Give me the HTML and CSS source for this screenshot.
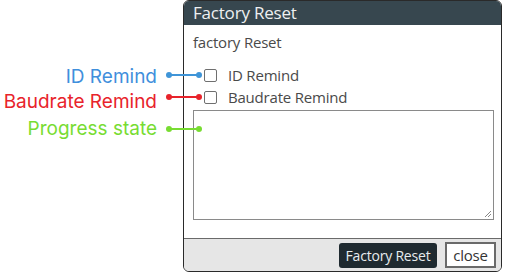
FILE: index.html
```html
<!DOCTYPE html>
<html>
<head>
<meta charset="utf-8">
<link rel="stylesheet" href="styles.css">
</head>
<body>
<div class="page">
  <div class="notes">
    <div class="note note-blue">ID Remind</div>
    <div class="note note-red">Baudrate Remind</div>
    <div class="note note-green">Progress state</div>
  </div>
  <div class="dialog">
    <div class="titlebar">Factory Reset</div>
    <div class="content">
      <div class="heading">factory Reset</div>
      <label class="check"><span class="box"></span>ID Remind</label>
      <label class="check"><span class="box"></span>Baudrate Remind</label>
      <div class="area"><svg class="grip" width="8" height="8" viewBox="0 0 8 8"><path d="M7 1 L1 7 M7 4 L4 7" stroke="#888" stroke-width="1"/></svg></div>
    </div>
    <div class="footer">
      <button class="btn btn-dark">Factory Reset</button>
      <button class="btn btn-light">close</button>
    </div>
  </div>
  <div class="line line-blue"></div>
  <div class="line line-red"></div>
  <div class="line line-green"></div>
</div>
</body>
</html>
```
FILE: styles.css
```css
html, body { margin: 0; padding: 0; background: #fff; }
.page {
  position: relative;
  width: 509px;
  height: 277px;
  display: flex;
  align-items: flex-start;
}
.notes {
  width: 183px;
  flex: none;
  padding-top: 64px;
  padding-right: 26px;
  box-sizing: border-box;
  display: flex;
  flex-direction: column;
  align-items: flex-end;
  font-family: Inter, Roboto, sans-serif;
  font-size: 19px;
}
.note { height: 25px; line-height: 25px; white-space: nowrap; }
.note-green { height: 27px; line-height: 27px; margin-top: 1px; }
.note-blue { color: #3f8fdc; }
.note-red { color: #e8232b; }
.note-green { color: #78dc32; }

.dialog {
  width: 319px;
  height: 272px;
  box-sizing: border-box;
  border: 1px solid #2a2a2a;
  border-radius: 6px;
  overflow: hidden;
  display: flex;
  flex-direction: column;
  font-family: "Open Sans", sans-serif;
  background: #fff;
}
.titlebar {
  height: 24px;
  line-height: 24px;
  background: #37474f;
  color: #eef0f1;
  font-size: 17px;
  padding-left: 9px;
  letter-spacing: -0.2px;
}
.content {
  flex: 1;
  padding: 6px 6px 0 9px;
  color: #4a4a4a;
  font-size: 15px;
  letter-spacing: -0.2px;
}
.heading { height: 22px; line-height: 22px; margin-bottom: 11px; }
.check {
  display: flex;
  align-items: center;
  height: 22px;
  padding-left: 11px;
}
.box {
  width: 11px;
  height: 11px;
  border: 1px solid #6f6f6f;
  border-radius: 2px;
  margin-right: 11px;
}
.area {
  position: relative;
  margin-top: 2px;
  width: 301px;
  height: 110px;
  box-sizing: border-box;
  border: 1px solid #8a8a8a;
}
.grip { position: absolute; right: 1px; bottom: 1px; }
.footer {
  height: 33px;
  box-sizing: border-box;
  border-top: 1px solid #6a6a6a;
  background: #e6e6e6;
  display: flex;
  justify-content: flex-end;
  align-items: center;
  padding-right: 5px;
  gap: 8px;
}
.btn {
  font-family: "Open Sans", sans-serif;
  font-size: 14px;
  letter-spacing: -0.2px;
  height: 25px;
  padding: 0 4px;
  margin: 0;
}
.btn-dark {
  background: #1f2a30;
  color: #e8ecee;
  border: none;
  border-radius: 3px;
  width: 98px;
}
.btn-light {
  background: #fff;
  color: #333;
  border: 2px solid #6a6a6a;
  border-radius: 0;
  width: 51px;
  height: 26px;
  font-size: 15px;
}

.line {
  position: absolute;
  left: 168px;
  width: 32px;
  height: 2px;
}
.line::before, .line::after {
  content: "";
  position: absolute;
  top: -2px;
  width: 6px;
  height: 6px;
  border-radius: 50%;
  background: inherit;
}
.line::before { left: -2px; }
.line::after { right: -2px; }
.line-blue { top: 74px; background: #3f95d8; }
.line-red { top: 96px; background: #e8232b; }
.line-green { top: 128px; background: #78dc32; }
```
